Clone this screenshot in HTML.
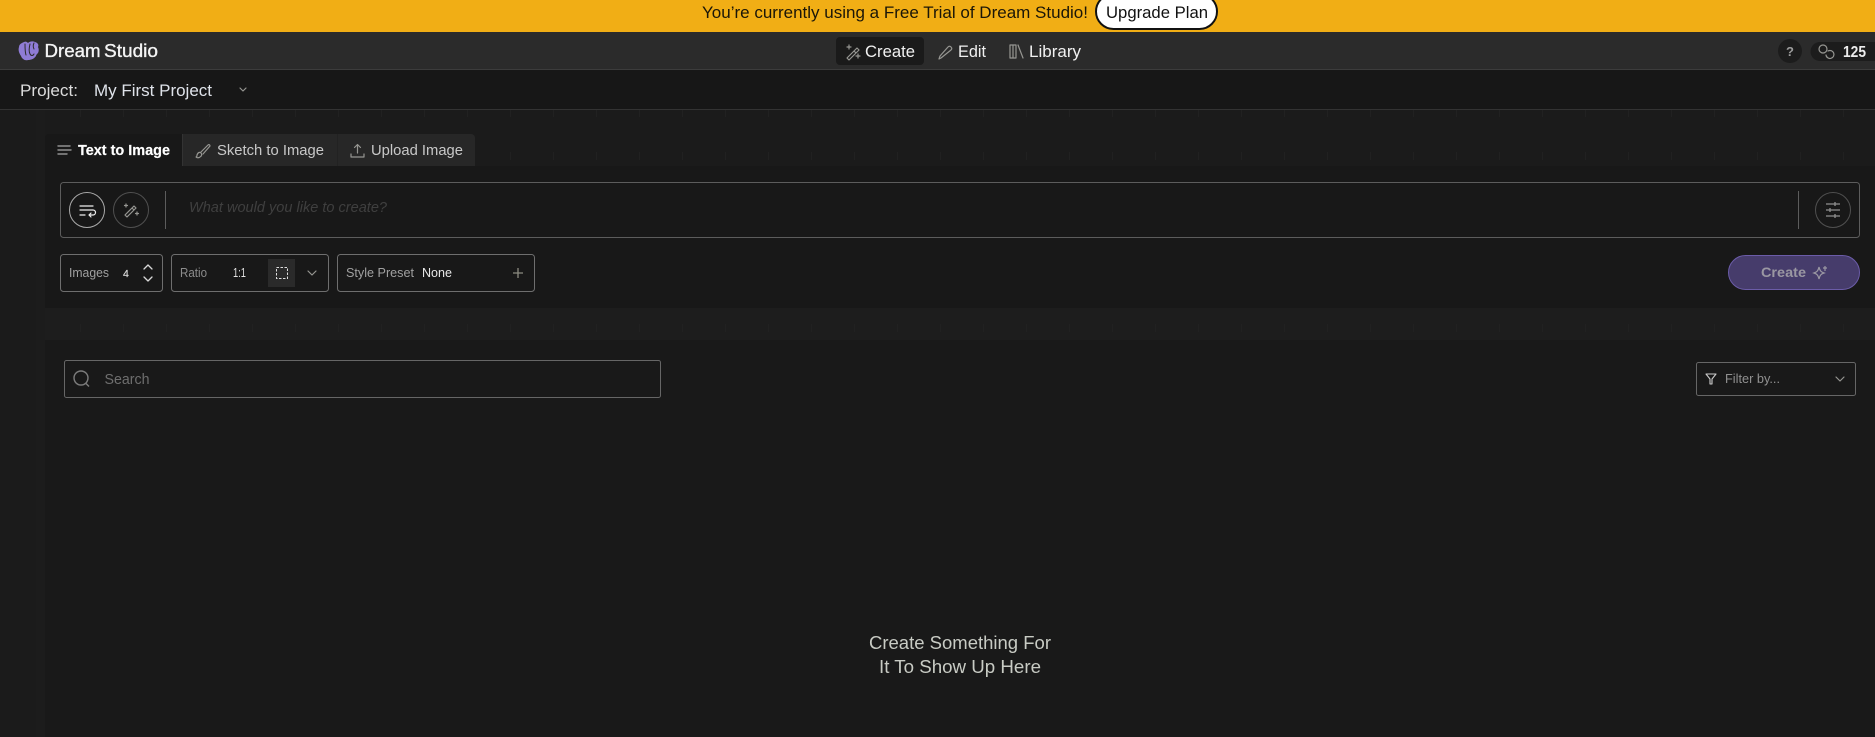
<!DOCTYPE html>
<html lang="en">
<head>
<meta charset="utf-8">
<title>DreamStudio</title>
<style>
html,body{margin:0;padding:0;background:#1a1a1a;width:1875px;height:737px;overflow:hidden}
svg{display:block}
text{font-family:"Liberation Sans",sans-serif}
.ic{fill:none;stroke:#969692;stroke-width:1.2;stroke-linecap:round;stroke-linejoin:round}
</style>
</head>
<body>
<svg width="1875" height="737" viewBox="0 0 1875 737" xmlns="http://www.w3.org/2000/svg">
<defs>
<pattern id="t" x="37" y="0" width="43" height="43" patternUnits="userSpaceOnUse"><rect x="0" y="23" width="1" height="8" fill="#212121"/></pattern>
</defs>
<rect width="1875" height="737" fill="#1b1b1b"/>
<rect y="110" width="1875" height="198" fill="url(#t)"/>
<rect x="36" y="110" width="9" height="627" fill="#1c1c1c"/>
<rect x="45" y="308" width="1830" height="32" fill="#1d1d1d"/>
<rect x="45" y="308" width="1830" height="32" fill="url(#t)"/>
<rect x="45" y="340" width="1830" height="397" fill="#191919"/>
<rect x="45" y="166" width="1830" height="142" fill="#181818"/>

<!-- banner -->
<rect width="1875" height="32" fill="#f1ae15"/>
<text x="702" y="18" font-size="16.5" fill="#1b1608" textLength="386" lengthAdjust="spacingAndGlyphs">You’re currently using a Free Trial of Dream Studio!</text>
<rect x="1096" y="-6" width="121" height="35" rx="17.5" fill="#fff" stroke="#111" stroke-width="2"/>
<text x="1106" y="18" font-size="16.5" fill="#111" textLength="102" lengthAdjust="spacingAndGlyphs">Upgrade Plan</text>

<!-- header -->
<rect y="32" width="1875" height="37" fill="#2b2b2b"/>
<rect y="69" width="1875" height="1" fill="#3c3c3c"/>
<path d="M24 42c2-1 3 0 4 1 2-2 5-2 7-1 3 1 4 3 3 5 1 2 1 4 0 6-1 1-2 2-2 3-2 3-5 4-8 4-3 1-6-1-7-4-2-3-3-6-2-9 0-3 3-4 5-5z" fill="#8f7cd6"/>
<path d="M25 44c0 4 0 8 1 11M30 44c-1 4-1 8 0 10 1 2 3 2 4 0M34 43c-1 2-1 4 0 6" fill="none" stroke="#2b2b2b" stroke-width="1" stroke-linecap="round"/>
<text x="44.500" y="57" font-size="18" fill="#f4f4f4" stroke="#f4f4f4" stroke-width=".35" textLength="56" lengthAdjust="spacingAndGlyphs">Dream</text>
<text x="104" y="57" font-size="18" fill="#f4f4f4" stroke="#f4f4f4" stroke-width=".35" textLength="54" lengthAdjust="spacingAndGlyphs">Studio</text>

<rect x="836" y="37" width="88" height="28" rx="4" fill="#1a1a1a"/>
<path class="ic" d="M847 58l10-10 2 2-10 10zM854 51l2 2M849 45v4M847 47h4M858 54v4M856 56h4"/>
<text x="865" y="57" font-size="17" fill="#f0f0f0" textLength="50" lengthAdjust="spacingAndGlyphs">Create</text>
<path class="ic" d="M941 58l-2 1 1-3 8-9c1-1 2-1 3 0s1 2 0 3z"/>
<text x="958" y="57" font-size="17" fill="#f0f0f0" textLength="28" lengthAdjust="spacingAndGlyphs">Edit</text>
<path class="ic" stroke="#9c9680" d="M1010 45v13M1013 45v13M1016 45v13M1018 45l5 13M1010 45h6M1010 58h6"/>
<text x="1029" y="57" font-size="17" fill="#f0f0f0" textLength="52" lengthAdjust="spacingAndGlyphs">Library</text>

<circle cx="1790" cy="51" r="12" fill="#1c1c1c"/>
<text x="1790" y="56" font-size="13" font-weight="bold" fill="#9c9c9c" text-anchor="middle">?</text>
<path d="M1820 42h55v19h-55a9.500 9.500 0 0 1 0-19z" fill="#1c1c1c"/>
<circle cx="1823" cy="49" r="4" class="ic"/>
<path class="ic" d="M1828 51a4 4 0 1 1-2 4"/>
<text x="1843" y="57" font-size="16" font-weight="bold" fill="#ececec" textLength="23" lengthAdjust="spacingAndGlyphs">125</text>

<!-- project row -->
<rect y="70" width="1875" height="39" fill="#171717"/>
<rect y="109" width="1875" height="1" fill="#333"/>
<text x="20" y="96" font-size="17" fill="#dcdcdc" textLength="58" lengthAdjust="spacingAndGlyphs">Project:</text>
<text x="94" y="96" font-size="17" fill="#dfe3ea" textLength="118" lengthAdjust="spacingAndGlyphs">My First Project</text>
<path class="ic" d="M240 88l3 3 3-3"/>

<!-- tabs -->
<path d="M45 166v-28a4 4 0 0 1 4-4h133v32z" fill="#181818"/>
<rect x="182" y="134" width="155" height="32" fill="#272727"/>
<path d="M337 134h134a4 4 0 0 1 4 4v28h-138z" fill="#272727"/>
<rect x="182" y="134" width="1" height="32" fill="#333"/>
<rect x="337" y="134" width="1" height="32" fill="#222"/>
<path d="M58 146h12M58 150h13M58 154h9" stroke="#909090" stroke-width="1.400" fill="none" stroke-linecap="round"/>
<text x="78" y="155" font-size="14.500" font-weight="bold" fill="#fff" stroke="#fff" stroke-width=".2" textLength="92" lengthAdjust="spacingAndGlyphs">Text to Image</text>
<path class="ic" d="M197 155c1-3 3-3 4-2 1 1 1 3-1 4-1 1-3 1-4 0 1 0 1-1 1-2zM201 152l7-7c1-1 2 0 2 1l-7 8"/>
<text x="217" y="155" font-size="14.500" fill="#c8c8c8" textLength="107" lengthAdjust="spacingAndGlyphs">Sketch to Image</text>
<path class="ic" d="M351 154v3h13v-3M357.500 153v-8M354.500 147.500l3-3 3 3"/>
<text x="371" y="155" font-size="14.500" fill="#c8c8c8" textLength="92" lengthAdjust="spacingAndGlyphs">Upload Image</text>

<!-- prompt -->
<rect x="60.500" y="182.500" width="1799" height="55" rx="3" fill="#181818" stroke="#5c5c5c"/>
<circle cx="87" cy="210" r="17.500" fill="#181818" stroke="#aaa"/>
<path d="M80 206h13M80 210h13a2.500 2.500 0 0 1 0 5h-4M91 213l-2 2 2 2M80 215h5" fill="none" stroke="#eee" stroke-width="1.200" stroke-linecap="round" stroke-linejoin="round"/>
<circle cx="131" cy="210" r="17.500" fill="#181818" stroke="#505050"/>
<path class="ic" d="M125 215l9-9 2 2-9 9zM132 208l2 2M126 204v3M124.500 205.500h3M137 212v3M135.500 213.500h3"/>
<rect x="165" y="191" width="1" height="38" fill="#5c5c5c"/>
<text x="189" y="212" font-size="14.500" font-style="italic" fill="#3f3f3f" textLength="198" lengthAdjust="spacingAndGlyphs">What would you like to create?</text>
<rect x="1798" y="191" width="1" height="38" fill="#5c5c5c"/>
<circle cx="1833" cy="210" r="17.500" fill="#181818" stroke="#505050"/>
<path d="M1826 204h14M1826 210h14M1826 216h14M1835 202v4M1830 208v4M1835 214v4" fill="none" stroke="#909090" stroke-width="1.300"/>

<!-- controls -->
<rect x="60.500" y="254.500" width="102" height="37" rx="3" fill="#181818" stroke="#6e6e6e"/>
<text x="69" y="277" font-size="12.500" fill="#a0a0a0" textLength="40" lengthAdjust="spacingAndGlyphs">Images</text>
<text x="123" y="277" font-size="10.500" fill="#d8d8d8" stroke="#d8d8d8" stroke-width=".2">4</text>
<path d="M144 269l4-4 4 4M144 277l4 4 4-4" fill="none" stroke="#d8d8d8" stroke-width="1.300" stroke-linecap="round" stroke-linejoin="round"/>
<rect x="171.500" y="254.500" width="157" height="37" rx="3" fill="#181818" stroke="#6e6e6e"/>
<text x="180" y="277" font-size="12.500" fill="#8c8c8c" textLength="27" lengthAdjust="spacingAndGlyphs">Ratio</text>
<text x="233" y="277" font-size="12.500" fill="#e2e2e2" textLength="13" lengthAdjust="spacingAndGlyphs">1:1</text>
<rect x="268" y="259" width="27" height="28" fill="#2a2a2a"/>
<rect x="276.500" y="267.500" width="11" height="11" fill="none" stroke="#ddd" stroke-dasharray="2.500 1.500"/>
<path class="ic" d="M308 271l4 4 4-4"/>
<rect x="337.500" y="254.500" width="197" height="37" rx="3" fill="#181818" stroke="#6e6e6e"/>
<text x="346" y="277" font-size="12.500" fill="#a0a0a0" textLength="68" lengthAdjust="spacingAndGlyphs">Style Preset</text>
<text x="422" y="277" font-size="12.500" fill="#e8e8e8" textLength="30" lengthAdjust="spacingAndGlyphs">None</text>
<path d="M513 273h10M518 268v10" stroke="#8c8a80" stroke-width="1.300" fill="none"/>
<rect x="1728.500" y="255.500" width="131" height="34" rx="17" fill="#463c6b" stroke="#6b5ca8"/>
<text x="1761" y="277" font-size="14" font-weight="bold" fill="#9a97a2" textLength="45" lengthAdjust="spacingAndGlyphs">Create</text>
<path d="M1819 267c1 4 2 5 5 6-3 1-4 2-5 6-1-4-2-5-5-6 3-1 4-2 5-6zM1825 266v5M1823 268h4" fill="none" stroke="#9a97a2" stroke-width="1.200"/>

<!-- search -->
<rect x="64.500" y="360.500" width="596" height="37" rx="2" fill="#191919" stroke="#666"/>
<circle cx="81" cy="378" r="7" fill="none" stroke="#7c7c7c" stroke-width="1.400"/>
<path d="M86 383.500l3 3" stroke="#7c7c7c" stroke-width="1.400"/>
<text x="104.500" y="384" font-size="14.500" fill="#6e6e6e" textLength="45" lengthAdjust="spacingAndGlyphs">Search</text>
<rect x="1696.500" y="362.500" width="159" height="33" rx="2" fill="#191919" stroke="#666"/>
<path d="M1706 374h10l-4 5v5h-2v-5z" fill="none" stroke="#ccc" stroke-width="1.100" stroke-linejoin="round"/>
<text x="1725" y="383" font-size="12.500" fill="#909090" textLength="55" lengthAdjust="spacingAndGlyphs">Filter by...</text>
<path class="ic" d="M1836 377l4 4 4-4"/>

<!-- empty -->
<text x="869" y="649" font-size="18" fill="#c8cbc4" textLength="182" lengthAdjust="spacingAndGlyphs">Create Something For</text>
<text x="879" y="673" font-size="18" fill="#c8cbc4" textLength="162" lengthAdjust="spacingAndGlyphs">It To Show Up Here</text>
</svg>
</body>
</html>
